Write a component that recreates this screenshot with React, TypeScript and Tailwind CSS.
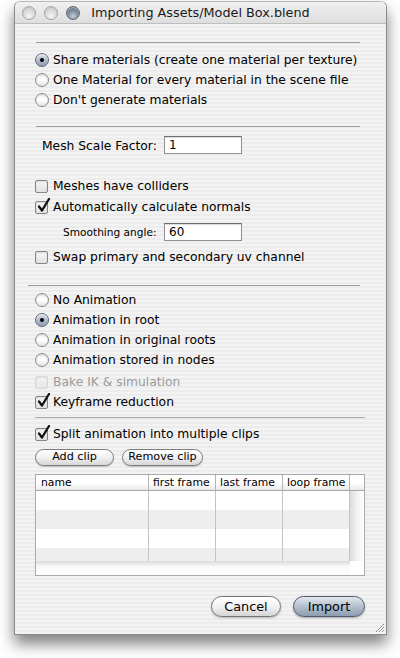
import React from "react";

const stripes =
  "bg-[repeating-linear-gradient(to_bottom,#ececec_0px,#ececec_2px,#f3f3f3_2px,#f3f3f3_4px)]";

function Radio({ label, checked }: { label: string; checked?: boolean }) {
  return (
    <div className="h-[20px] flex items-center">
      <span
        className={
          checked
            ? "w-[14px] h-[14px] rounded-full border border-[#5f6b7a] bg-gradient-to-b from-[#d7dde6] to-[#8e9cb0] flex items-center justify-center shadow-[inset_0_1px_1px_rgba(255,255,255,0.8)]"
            : "w-[14px] h-[14px] rounded-full border border-[#8d8d8d] bg-gradient-to-b from-[#f4f4f4] via-white to-[#e4e4e4] shadow-[inset_0_1px_2px_rgba(0,0,0,0.15)]"
        }
      >
        {checked && <span className="w-[4px] h-[4px] rounded-full bg-black" />}
      </span>
      <span className="ml-[4px]">{label}</span>
    </div>
  );
}

function Check({ label, checked, disabled }: { label: string; checked?: boolean; disabled?: boolean }) {
  return (
    <div className="h-[20px] flex items-center">
      <span
        className={
          "relative w-[13px] h-[13px] rounded-[2px] border bg-gradient-to-b from-[#f7f7f7] to-[#e2e2e2] shadow-[inset_0_1px_2px_rgba(0,0,0,0.12)] " +
          (disabled ? "border-[#c6c6c6] opacity-60" : "border-[#868686]")
        }
      >
        {checked && (
          <svg className="absolute left-[1px] top-[-4px]" width="14" height="15" viewBox="0 0 14 15">
            <path d="M2 8.5 L5 12.5 L12 1" fill="none" stroke="#111" strokeWidth="2.3" strokeLinecap="round" strokeLinejoin="round" />
          </svg>
        )}
      </span>
      <span className={"ml-[5px] " + (disabled ? "text-[#9b9b9b]" : "")}>{label}</span>
    </div>
  );
}

function Field({ value }: { value: string }) {
  return (
    <div className="w-[78px] h-[18px] bg-white border border-[#8f8f8f] border-t-[#6f6f6f] shadow-[inset_0_1px_1px_rgba(0,0,0,0.15)] pl-[4px] flex items-center text-[12px]">
      {value}
    </div>
  );
}

function Light({ dark }: { dark?: boolean }) {
  return (
    <span
      className={
        dark
          ? "w-[14px] h-[14px] rounded-full border border-[#5e6674] bg-[radial-gradient(circle_at_50%_75%,#c4ccd8_0%,#8390a2_45%,#4f5a69_100%)] shadow-[inset_0_1px_1px_rgba(255,255,255,0.6)]"
          : "w-[14px] h-[14px] rounded-full border border-[#a3a3a3] bg-[radial-gradient(circle_at_50%_75%,#f6f6f6_0%,#dadada_50%,#c2c2c2_100%)]"
      }
    />
  );
}

const rows = ["bg-white", "bg-[#eeeeee]", "bg-white", "bg-[#eeeeee]"];

export default function App() {
  return (
    <div className="w-[400px] h-[658px] bg-white overflow-hidden text-[12.3px] text-black font-['DejaVu_Sans',sans-serif]">
      <div className={"ml-[14px] mt-[1px] w-[373px] h-[634px] rounded-t-[6px] border border-[#8a8a8a] border-t-[#b8b8b8] shadow-[0_9px_15px_rgba(0,0,0,0.5)] flex flex-col overflow-hidden " + stripes}>
        {/* title bar */}
        <div className="h-[22px] shrink-0 flex items-center bg-gradient-to-b from-[#f0f0f0] to-[#dedede] border-b border-[#bdbdbd] relative">
          <div className="flex items-center gap-[8px] pl-[7px]">
            <Light />
            <Light />
            <Light dark />
          </div>
          <div className="absolute inset-0 flex items-center justify-center text-[12.8px] text-[#1a1a1a]">
            Importing Assets/Model Box.blend
          </div>
        </div>

        {/* body */}
        <div className="relative flex-1 pl-[20px] pr-[21px] flex flex-col">
          <div className="mt-[18px] ml-[1px] mr-[5px] h-px bg-[#9e9e9e]" />
          <div className="mt-[7px]">
            <Radio label="Share materials (create one material per texture)" checked />
            <Radio label="One Material for every material in the scene file" />
            <Radio label="Don't generate materials" />
          </div>
          <div className="mt-[16px] ml-[1px] mr-[5px] h-px bg-[#9e9e9e]" />

          <div className="mt-[8px] h-[19px] flex items-center">
            <span className="ml-[7px] w-[122px] pt-[3px]">Mesh Scale Factor:</span>
            <Field value="1" />
          </div>

          <div className="mt-[22px]">
            <Check label="Meshes have colliders" />
            <div className="mt-[1px]">
              <Check label="Automatically calculate normals" checked />
            </div>
          </div>
          <div className="mt-[6px] h-[18px] flex items-center">
            <span className="ml-[28px] w-[101px] text-[10.6px] pt-[2px]">Smoothing angle:</span>
            <Field value="60" />
          </div>
          <div className="mt-[6px]">
            <Check label="Swap primary and secondary uv channel" />
          </div>

          <div className="mt-[18px] -ml-[7px] mr-[5px] h-px bg-[#9e9e9e]" />
          <div className="mt-[4px]">
            <Radio label="No Animation" />
            <Radio label="Animation in root" checked />
            <Radio label="Animation in original roots" />
            <Radio label="Animation stored in nodes" />
          </div>
          <div className="mt-[2px]">
            <Check label="Bake IK & simulation" disabled />
            <Check label="Keyframe reduction" checked />
          </div>
          <div className="mt-[5px] h-px bg-[#a6a6a6]" />
          <div className="mt-[6px]">
            <Check label="Split animation into multiple clips" checked />
          </div>

          <div className="mt-[5px] flex gap-[8px] text-[11.2px]">
            <button className="w-[79px] h-[17px] rounded-full border border-[#7d7d7d] bg-gradient-to-b from-white via-[#f1f1f1] to-[#d6d6d6] shadow-[0_1px_1px_rgba(0,0,0,0.2)] flex items-center justify-center">
              Add clip
            </button>
            <button className="w-[81px] h-[17px] rounded-full border border-[#7d7d7d] bg-gradient-to-b from-white via-[#f1f1f1] to-[#d6d6d6] shadow-[0_1px_1px_rgba(0,0,0,0.2)] flex items-center justify-center">
              Remove clip
            </button>
          </div>

          {/* clip table */}
          <div className="mt-[8px] h-[102px] border border-[#a9a9a9] bg-white flex flex-col text-[10.8px]">
            <div className="h-[16px] shrink-0 flex border-b border-[#a9a9a9] bg-gradient-to-b from-white via-white to-[#e9e9e9]">
              <div className="w-[113px] border-r border-[#b4b4b4] pl-[5px] leading-[15px]">name</div>
              <div className="w-[67px] border-r border-[#b4b4b4] pl-[4px] leading-[15px]">first frame</div>
              <div className="w-[67px] border-r border-[#b4b4b4] pl-[4px] leading-[15px]">last frame</div>
              <div className="w-[67px] border-r border-[#b4b4b4] pl-[4px] leading-[15px]">loop frame</div>
              <div className="flex-1" />
            </div>
            <div className="h-[70px] shrink-0 flex">
              <div className="w-[314px] overflow-hidden">
                {rows.map((bg, i) => (
                  <div key={i} className={"h-[19px] flex " + bg}>
                    <div className="w-[113px] border-r border-[#c4c4c4]" />
                    <div className="w-[67px] border-r border-[#c4c4c4]" />
                    <div className="w-[67px] border-r border-[#c4c4c4]" />
                    <div className="w-[67px] border-r border-[#c4c4c4]" />
                  </div>
                ))}
              </div>
              <div className="flex-1 bg-gradient-to-r from-[#dcdcdc] via-[#f2f2f2] to-white" />
            </div>
            <div className="flex-1 flex">
              <div className="w-[314px] bg-gradient-to-b from-[#dadada] via-[#f8f8f8] via-40% to-white" />
              <div className="flex-1 bg-white" />
            </div>
          </div>

          <div className="mt-[20px] flex justify-end gap-[12px] text-[12.8px]">
            <button className="w-[70px] h-[21px] rounded-full border border-[#747474] bg-gradient-to-b from-white via-[#f2f2f2] to-[#d4d4d4] shadow-[0_1px_2px_rgba(0,0,0,0.25)] flex items-center justify-center">
              Cancel
            </button>
            <button className="w-[72px] h-[21px] rounded-full border border-[#4f5b6b] bg-gradient-to-b from-[#e3e8ee] via-[#b3bfcd] to-[#8d9cb0] shadow-[0_1px_2px_rgba(0,0,0,0.3)] flex items-center justify-center">
              Import
            </button>
          </div>

          {/* resize grip */}
          <svg className="absolute right-[1px] bottom-[1px]" width="12" height="12" viewBox="0 0 12 12">
            <path d="M11 3 L3 11 M11 6 L6 11 M11 9 L9 11" stroke="#8f8f8f" strokeWidth="1" />
            <path d="M11 4 L4 11 M11 7 L7 11 M11 10 L10 11" stroke="#ffffff" strokeWidth="1" />
          </svg>
        </div>
      </div>
    </div>
  );
}
